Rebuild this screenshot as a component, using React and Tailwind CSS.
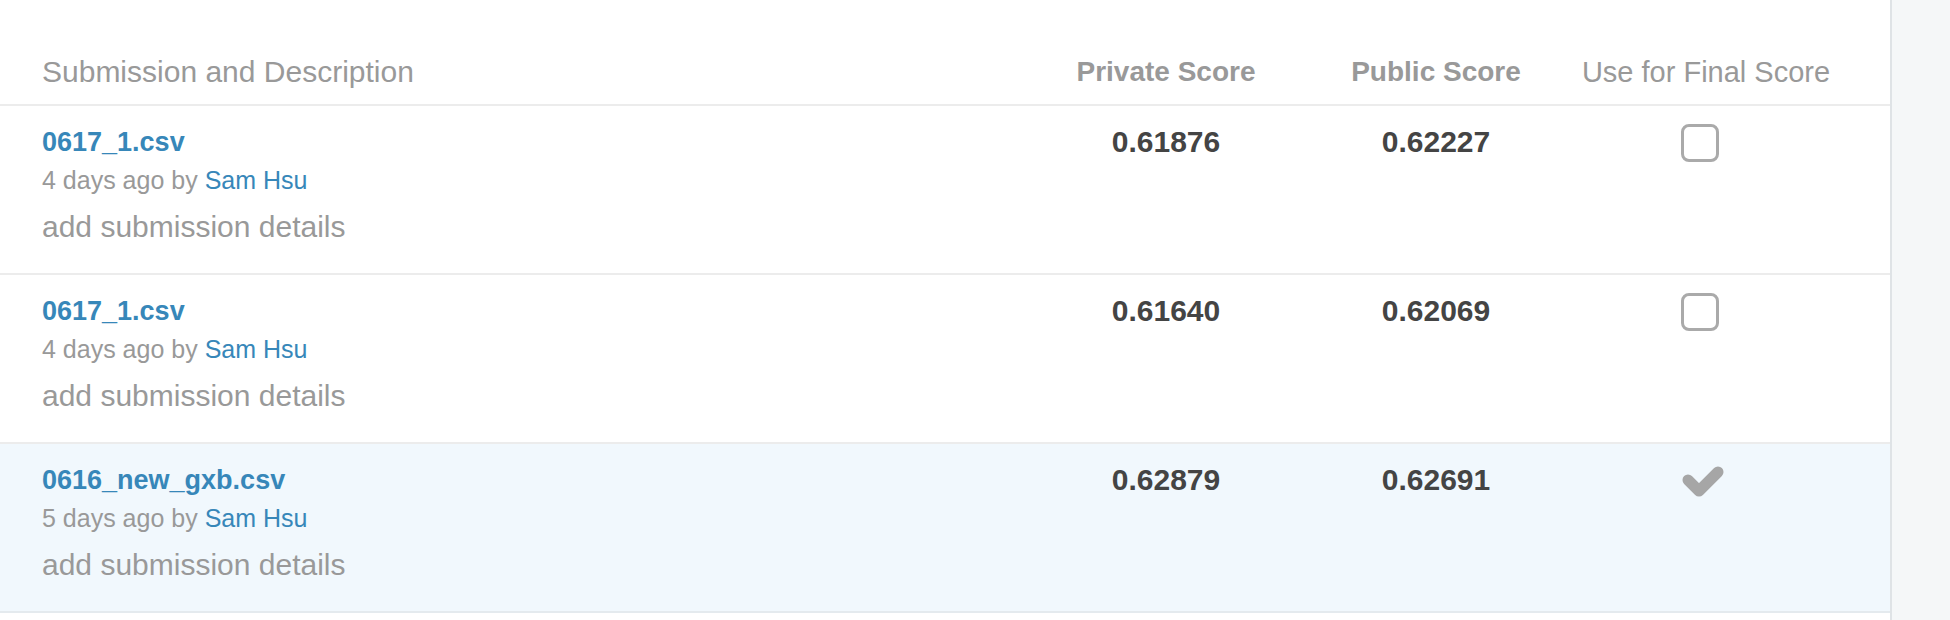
import React from 'react';

const submissions = [
    { file: '0617_1.csv', age: '4 days ago', user: 'Sam Hsu', priv: '0.61876', pub: '0.62227', selected: false },
    { file: '0617_1.csv', age: '4 days ago', user: 'Sam Hsu', priv: '0.61640', pub: '0.62069', selected: false },
    { file: '0616_new_gxb.csv', age: '5 days ago', user: 'Sam Hsu', priv: '0.62879', pub: '0.62691', selected: true },
];

const CheckMark = () => (
    <svg width="46" height="34" viewBox="0 0 46 34" className="mt-[22px]">
        <polyline
            points="8,14 19,25 38,6"
            fill="none"
            stroke="#a6a6a6"
            strokeWidth="11"
            strokeLinecap="round"
            strokeLinejoin="round"
        />
    </svg>
);

const SubmissionRow = ({ row }) => {
    const rowBg = row.selected ? 'bg-[#f1f8fd] border-[#e4eaee]' : 'bg-white border-[#ececec]';
    return (
        <div className={`grid grid-cols-[1fr_270px_270px_270px] pr-[49px] border-b-2 ${rowBg}`}>
            <div className="pl-[42px] pt-[20px] pb-[28px]">
                <div className="h-[32px] leading-[32px] text-[27px] font-bold text-[#3787b9]">{row.file}</div>
                <div className="mt-[7px] h-[30px] leading-[30px] text-[25px] text-[#999999]">
                    {row.age} by <span className="text-[#3787b9]">{row.user}</span>
                </div>
                <div className="mt-[14px] h-[36px] leading-[36px] text-[30px] text-[#999999]">add submission details</div>
            </div>
            <div className="pt-[20px] text-center h-[32px] leading-[32px] text-[30px] font-bold text-[#444444]">{row.priv}</div>
            <div className="pt-[20px] text-center h-[32px] leading-[32px] text-[30px] font-bold text-[#444444]">{row.pub}</div>
            <div className="flex justify-center items-start">
                {row.selected ? (
                    <div className="pr-[6px]">
                        <CheckMark />
                    </div>
                ) : (
                    <div className="pr-[12px]">
                        <div className="mt-[18px] w-[38px] h-[38px] rounded-[8px] border-[3px] border-[#aaaaaa] bg-white" />
                    </div>
                )}
            </div>
        </div>
    );
};

export default function App() {
    return (
        <div className="flex w-[1950px] h-[620px] bg-white font-['Liberation_Sans',Arial,sans-serif]">
            <div className="w-[1890px] flex flex-col">
                <div className="grid grid-cols-[1fr_270px_270px_270px] pr-[49px] pt-[54px] pb-[14px] border-b-2 border-[#ececec] text-[30px] leading-[36px] text-[#999999]">
                    <div className="pl-[42px]">Submission and Description</div>
                    <div className="text-center font-bold text-[28px]">Private Score</div>
                    <div className="text-center font-bold text-[28px]">Public Score</div>
                    <div className="text-center text-[29px]">Use for Final Score</div>
                </div>
                {submissions.map((row, index) => (
                    <SubmissionRow key={index} row={row} />
                ))}
            </div>
            <div className="flex-1 border-l-2 border-[#dfe3e6] bg-[#f5f7f8]" />
        </div>
    );
}
